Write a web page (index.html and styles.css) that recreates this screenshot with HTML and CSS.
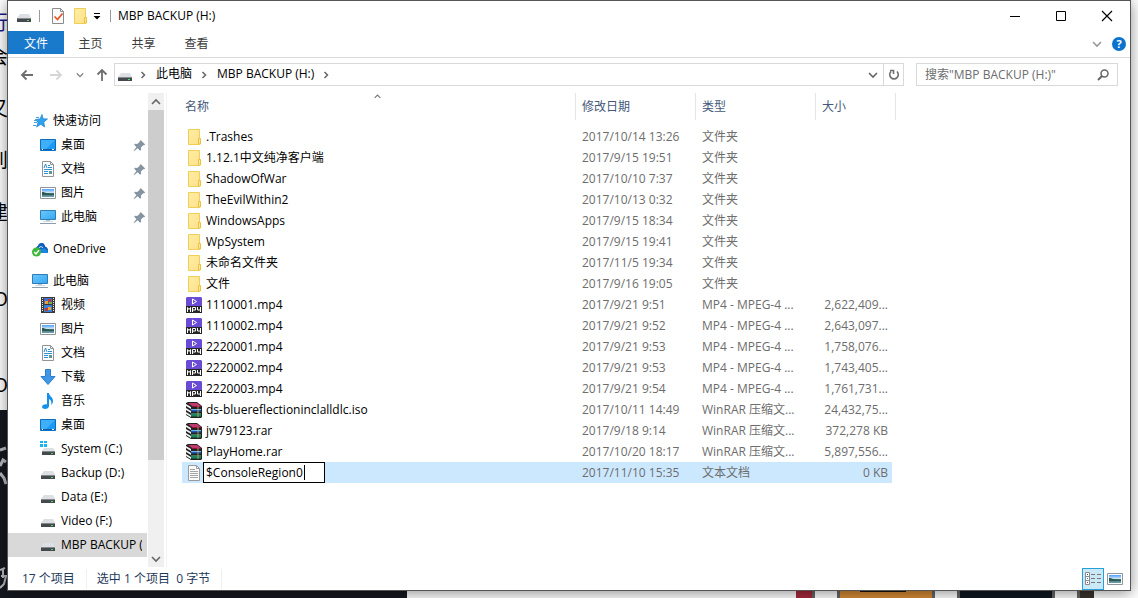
FILE: index.html
```html
<!DOCTYPE html>
<html lang="zh-CN">
<head>
    <meta charset="UTF-8">
    <meta name="viewport" content="width=device-width, initial-scale=1.0">
    <title>MBP BACKUP (H:)</title>
    <link rel="stylesheet" href="styles.css">
</head>
<body>
    <svg class="sprite" aria-hidden="true">
        <defs>
            <linearGradient id="gFolder" x1="0" x2="1" y1="0" y2="1">
                <stop offset="0" stop-color="#ffeda6"/><stop offset="1" stop-color="#ffe18a"/>
            </linearGradient>
            <linearGradient id="gScreen" x1="0" x2="1" y1="0" y2="1">
                <stop offset="0" stop-color="#6cc8fb"/><stop offset="1" stop-color="#35a7f2"/>
            </linearGradient>
            <linearGradient id="gPhoto" x1="0" x2="0" y1="0" y2="1">
                <stop offset="0" stop-color="#4f9df5"/><stop offset=".5" stop-color="#d6ecf8"/>
                <stop offset=".55" stop-color="#3f6f66"/><stop offset="1" stop-color="#6fa0b4"/>
            </linearGradient>
        </defs>
        <symbol id="folder" viewBox="0 0 16 16">
            <path d="M2.500.5h11v15h-11z" fill="url(#gFolder)" stroke="#f1cf57"/>
            <path d="M12.500 9.500h2v5.500h-2z" fill="#ffe79a" stroke="#e9c23f"/>
        </symbol>
        <symbol id="drive" viewBox="0 0 16 16">
            <path d="M4 6h9l2 4H1z" fill="#dcdfe3"/>
            <path d="M1 10h14v4H1z" fill="#45484c"/>
            <path d="M1 10h14v1H1z" fill="#85898e"/>
            <path d="M11 12h2v1h-2z" fill="#3fe05b"/>
        </symbol>
        <symbol id="sysdrive" viewBox="0 0 16 16">
            <path d="M0 0h3v2H0zM4 0h3v2H4zM0 3h3v3H0zM4 3h3v3H4z" fill="#14b4f0"/>
            <path d="M4 7h9l2 3H2z" fill="#dcdfe3"/>
            <path d="M2 10h13v4H2z" fill="#45484c"/>
            <path d="M2 10h13v1H2z" fill="#85898e"/>
            <path d="M11 12h2v1h-2z" fill="#3fe05b"/>
        </symbol>
        <symbol id="props" viewBox="0 0 16 16">
            <path d="M2.500.5h8l3 3v12h-11z" fill="#fbfbfb" stroke="#8b8b8b"/>
            <path d="M10.500.5v3h3" fill="none" stroke="#8b8b8b"/>
            <path d="M4.500 8.500l3 3 5-6" fill="none" stroke="#e9531e" stroke-width="1.700"/>
        </symbol>
        <symbol id="star" viewBox="0 0 16 16">
            <path d="M10 1.500l1 4.200 4.500.3-3.700 3 .8 5-3.800-2.700-4.300 2.700L6 9.500 3.500 6.500 8 6z" fill="#2da2ee" stroke="#1a7fd0" stroke-width=".7"/>
            <path d="M4 4.500h3M2 7.500h3M2 9.500h3M1 12.500h3" stroke="#4d9fd8"/>
        </symbol>
        <symbol id="desktop" viewBox="0 0 16 16">
            <path d="M.5 2.500h15v11H.5z" fill="#1b9bf5" stroke="#0d6ebd"/>
            <path d="M1 3h14L6 12H1z" fill="#3eb0fb"/>
            <path d="M1 12h14v1H1z" fill="#0b62ab"/>
            <path d="M2 12h1v1H2zM12 12h2v1h-2z" fill="#fff"/>
        </symbol>
        <symbol id="doc" viewBox="0 0 16 16">
            <path d="M2.500.5h8l3 3v12h-11z" fill="#fdfdfd" stroke="#8f969b"/>
            <path d="M10.500.5v3h3" fill="none" stroke="#8f969b"/>
            <path d="M4 7l1.500-4L7 7M8 4.500h2M8 6.500h4M4 8.500h8M4 10.500h4M4 12.500h4" fill="none" stroke="#2d8fd6"/>
            <path d="M9 10h3v3H9z" fill="#5a9a95"/>
        </symbol>
        <symbol id="picture" viewBox="0 0 16 16">
            <path d="M.5 2.500h15v11H.5z" fill="#fff" stroke="#8f969b"/>
            <path d="M2 4h12v8H2z" fill="url(#gPhoto)"/>
            <path d="M2 7c3 0 5 2 12 2v1H2z" fill="#2e5a50"/>
        </symbol>
        <symbol id="pc" viewBox="0 0 16 16">
            <path d="M.5 1.500h15v9H.5z" fill="url(#gScreen)" stroke="#2f7db5"/>
            <path d="M6 11h4v1H6z" fill="#a9c8dc"/>
            <path d="M3 12.500h10" stroke="#d3dce2"/>
            <path d="M0 14.500h16" stroke="#8a9eac"/>
        </symbol>
        <symbol id="cloud" viewBox="0 0 16 16">
            <path d="M4 11V8c0-2 1-3 2-3 0-2 2-3.500 4-3 2 0 3 2 3 3.500 2 .5 3 2 3 3.500v3H7z" fill="#0f5fb8"/>
            <path d="M7 12c-1-3 1-5 3.500-4 1-1.500 3.500-1 3.500 1 1.500 0 2 1 2 3z" fill="#1a86dd"/>
            <path d="M7 7c1-2 3-1.500 4 0" fill="none" stroke="#fff"/>
            <circle cx="4.500" cy="11" r="4.500" fill="#3fb83a"/>
            <path d="M2.300 11l1.700 2 3-3.700" fill="none" stroke="#fff" stroke-width="1.400"/>
        </symbol>
        <symbol id="video" viewBox="0 0 16 16">
            <path d="M1 0h14v16H1z" fill="#3a3a3a"/>
            <path d="M2.500 1v14M13.500 1v14" stroke="#e8e8e8" stroke-dasharray="1 1"/>
            <path d="M4 1h8v6H4z" fill="#3f6fd0"/><path d="M4 8h8v7H4z" fill="#3a7fd8"/>
            <path d="M5 4h3v3H5zM8 10h3v3H8z" fill="#f0a22b"/>
            <path d="M8 2h3v3H8zM5 11h3v3H5z" fill="#c0392b"/>
            <path d="M9 5h3v2H9z" fill="#79b33a"/>
        </symbol>
        <symbol id="download" viewBox="0 0 16 16">
            <path d="M5.500.5h5v7h4.500l-7 8-7-8h4.500z" fill="#3f97e6" stroke="#2b7cca"/>
        </symbol>
        <symbol id="music" viewBox="0 0 16 16">
            <path d="M7 0h2c0 3 4 4 4 8 0 2-1 3-2 4 1-3 0-5-2-6v7c0 2-2 3-4 3s-3-1-3-2.200c0-1.800 3-3 5-2.300z" fill="#1590ea"/>
        </symbol>
        <symbol id="pin" viewBox="0 0 16 16">
            <path d="M9.500 2.500l4.500 4.500-1 .8-1-.2-2.500 2.500.3 2.400-1.200 1L6 11l-4 3-.3-.3 3-4L2.300 7.300l1-1.200 2.400.3L8.300 4 8 3.200z" fill="#8494a1"/>
        </symbol>
        <symbol id="mp4" viewBox="0 0 16 16">
            <path d="M1 0h14l1 1v8H0V1z" fill="#6a4bd6"/>
            <path d="M0 9h16v7H0z" fill="#252525"/>
            <path d="M6.500 2v5l4-2.500z" fill="none" stroke="#fff"/>
            <path d="M1.500 15v-4.500L3 12.500l1.500-2V15M6.500 15v-4.500h3v2.500h-3M11.500 10v3h3M14.500 10v5" fill="none" stroke="#fff"/>
        </symbol>
        <symbol id="rar" viewBox="0 0 16 16">
            <path d="M0 1l2-1h9l5 4v11l-1 1H5l-5-3z" fill="#222"/>
            <path d="M0 2l5 3v2L0 4zM0 6l5 3v2L0 8zM0 10l5 3v2L0 12z" fill="#f3f3f3"/>
            <path d="M2 1h9l4 3H6z" fill="#c03a6c"/><path d="M6 4h9v1H6z" fill="#8a1340"/>
            <path d="M5 7h10v1H5z" fill="#6fb6f0"/><path d="M5 8h10v1.500H5z" fill="#1c57b8"/>
            <path d="M5 11.500h10v1H5z" fill="#58d0a4"/><path d="M5 12.500h10v2H5z" fill="#11865c"/>
            <path d="M11 4h2v11h-2z" fill="#e9c14a" opacity=".35"/>
        </symbol>
        <symbol id="txt" viewBox="0 0 16 16">
            <path d="M2.500.5h8l3 3v12h-11z" fill="#fafafa" stroke="#9a9a9a"/>
            <path d="M10.500.5v3h3" fill="none" stroke="#9a9a9a"/>
            <path d="M4 4.500h5M4 6.500h8M4 8.500h8M4 10.500h8M4 12.500h8" stroke="#a5a5a5"/>
        </symbol>
        <symbol id="details" viewBox="0 0 16 16">
            <path d="M.5 1.500h4v12h-4zM.5 5.500h4M.5 9.500h4" fill="#fff" stroke="#8c8c8c"/>
            <path d="M6 3.500h4M12 3.500h4M6 7.500h4M12 7.500h4M6 11.500h4M12 11.500h4" stroke="#777"/>
            <path d="M2 3h1v1H2z" fill="#444"/><path d="M2 7h1v1H2z" fill="#1f8ae0"/><path d="M2 11h1v1H2z" fill="#e02020"/>
        </symbol>
        <symbol id="chevron" viewBox="0 0 10 10"><path d="M1 3l4 4 4-4" fill="none" stroke="currentColor" stroke-width="1.600"/></symbol>
        <symbol id="crumb" viewBox="0 0 10 10"><path d="M3.500 2l3 3-3 3" fill="none" stroke="currentColor" stroke-width="1.500"/></symbol>
    </svg>

    <!-- page behind the window -->
    <div class="backdrop">
        <div class="article">
            <p class="linked">行</p>
            <p>会</p>
            <p class="gap">又</p>
            <p class="gap">到</p>
            <p class="gap">建</p>
            <p>冫</p>
            <p class="gap">O</p>
            <p></p>
            <p class="gap">O</p>
        </div>
        <div class="media">
            <div class="photo">
                <svg width="8" height="182" fill="none" stroke="#b9bbc0">
                    <path d="M0 40l6-2M0 56l3-6 3 2M0 63l4 5 2 6" stroke-width="3"/>
                    <path d="M0 160l5-2M1 166h5l-2 8-4 4M3 158v10" stroke-width="2"/>
                </svg>
            </div>
            <div class="phones">
                <span class="phone phone-red"></span>
                <span class="phone phone-orange"></span>
                <span class="phone phone-dark"></span>
                <span class="phone phone-cut"></span>
            </div>
        </div>
    </div>

    <main class="window">
        <header class="titlebar">
            <svg class="icon"><use href="#drive"/></svg>
            <span class="sep"></span>
            <button class="quick" aria-label="属性"><svg class="icon"><use href="#props"/></svg></button>
            <button class="quick" aria-label="新建文件夹"><svg class="icon"><use href="#folder"/></svg></button>
            <button class="more" aria-label="自定义快速访问工具栏">
                <svg width="8" height="8" viewBox="0 0 8 8"><path d="M1 1.500h6" stroke="#000"/><path d="M.5 4h7L4 7.500z"/></svg>
            </button>
            <span class="sep"></span>
            <h1>MBP BACKUP (H:)</h1>
            <div class="controls">
                <button aria-label="最小化"><svg width="12" height="12"><path d="M1 6.500h10" stroke="#000"/></svg></button>
                <button aria-label="最大化"><svg width="12" height="12"><path d="M1.500 1.500h9v9h-9z" fill="none" stroke="#000"/></svg></button>
                <button aria-label="关闭"><svg width="12" height="12"><path d="M1 1l10 10M11 1L1 11" stroke="#000" stroke-width="1.200"/></svg></button>
            </div>
        </header>

        <nav class="ribbon">
            <button class="file-tab">文件</button>
            <button>主页</button>
            <button>共享</button>
            <button>查看</button>
            <div class="ribbon-end">
                <button aria-label="展开功能区"><svg class="small light"><use href="#chevron"/></svg></button>
                <button class="help" aria-label="帮助">?</button>
            </div>
        </nav>

        <div class="address-row">
            <button class="nav-btn" aria-label="后退"><svg width="14" height="12"><path d="M13 6H2M6.500 1.500L2 6l4.500 4.500" fill="none" stroke="#6e6e6e" stroke-width="1.800"/></svg></button>
            <button class="nav-btn" aria-label="前进"><svg width="14" height="12"><path d="M1 6h11M7.500 1.500L12 6l-4.500 4.500" fill="none" stroke="#d6d6d6" stroke-width="1.800"/></svg></button>
            <button class="nav-btn recent" aria-label="最近浏览的位置"><svg class="tiny"><use href="#chevron"/></svg></button>
            <button class="nav-btn up" aria-label="上移"><svg width="12" height="14"><path d="M6 13V2M1.500 6.500L6 2l4.500 4.500" fill="none" stroke="#6e6e6e" stroke-width="1.800"/></svg></button>
            <div class="address">
                <svg class="icon"><use href="#drive"/></svg>
                <svg class="small"><use href="#crumb"/></svg>
                <a href="#pc">此电脑</a>
                <svg class="small"><use href="#crumb"/></svg>
                <a href="#h">MBP BACKUP (H:)</a>
                <svg class="small"><use href="#crumb"/></svg>
                <button class="drop" aria-label="以前的位置"><svg class="small"><use href="#chevron"/></svg></button>
                <button class="refresh" aria-label="刷新">
                    <svg width="12" height="12" viewBox="0 0 12 12"><path d="M3 2.500A4.300 4.300 0 1 0 9 2.500M2 1.500h3.500V5" fill="none" stroke="#6e6e6e" stroke-width="1.600"/></svg>
                </button>
            </div>
            <label class="search">
                <input type="search" placeholder='搜索"MBP BACKUP (H:)"' aria-label="搜索">
                <svg width="12" height="12" viewBox="0 0 12 12"><circle cx="7.500" cy="4.500" r="3.500" fill="none" stroke="#666" stroke-width="1.500"/><path d="M5 7L1 11" stroke="#666" stroke-width="2"/></svg>
            </label>
        </div>

        <div class="content">
            <aside class="tree">
                <ul>
                    <li class="root"><a href="#quick"><svg class="icon"><use href="#star"/></svg>快速访问</a></li>
                    <li><a href="#desktop"><svg class="icon"><use href="#desktop"/></svg>桌面</a><svg class="pin"><use href="#pin"/></svg></li>
                    <li><a href="#docs"><svg class="icon"><use href="#doc"/></svg>文档</a><svg class="pin"><use href="#pin"/></svg></li>
                    <li><a href="#pics"><svg class="icon"><use href="#picture"/></svg>图片</a><svg class="pin"><use href="#pin"/></svg></li>
                    <li><a href="#pc"><svg class="icon"><use href="#pc"/></svg>此电脑</a><svg class="pin"><use href="#pin"/></svg></li>
                </ul>
                <ul>
                    <li class="root"><a href="#onedrive"><svg class="icon"><use href="#cloud"/></svg>OneDrive</a></li>
                </ul>
                <ul>
                    <li class="root"><a href="#pc"><svg class="icon"><use href="#pc"/></svg>此电脑</a></li>
                    <li><a href="#videos"><svg class="icon"><use href="#video"/></svg>视频</a></li>
                    <li><a href="#pics"><svg class="icon"><use href="#picture"/></svg>图片</a></li>
                    <li><a href="#docs"><svg class="icon"><use href="#doc"/></svg>文档</a></li>
                    <li><a href="#downloads"><svg class="icon"><use href="#download"/></svg>下载</a></li>
                    <li><a href="#music"><svg class="icon"><use href="#music"/></svg>音乐</a></li>
                    <li><a href="#desktop"><svg class="icon"><use href="#desktop"/></svg>桌面</a></li>
                    <li><a href="#c"><svg class="icon"><use href="#sysdrive"/></svg>System (C:)</a></li>
                    <li><a href="#d"><svg class="icon"><use href="#drive"/></svg>Backup (D:)</a></li>
                    <li><a href="#e"><svg class="icon"><use href="#drive"/></svg>Data (E:)</a></li>
                    <li><a href="#f"><svg class="icon"><use href="#drive"/></svg>Video (F:)</a></li>
                    <li class="current"><a href="#h"><svg class="icon"><use href="#drive"/></svg>MBP BACKUP (H:)</a></li>
                </ul>
            </aside>
            <div class="scrollbar">
                <button aria-label="向上滚动"><svg class="small flip"><use href="#chevron"/></svg></button>
                <div class="thumb"></div>
                <button aria-label="向下滚动"><svg class="small"><use href="#chevron"/></svg></button>
            </div>

            <section class="files">
                <table>
                    <colgroup><col class="c-name"><col class="c-date"><col class="c-type"><col class="c-size"></colgroup>
                    <thead>
                        <tr>
                            <th>名称<svg class="sort"><use href="#chevron"/></svg></th>
                            <th>修改日期</th>
                            <th>类型</th>
                            <th>大小</th>
                        </tr>
                    </thead>
                    <tbody>
                        <tr><td><svg class="icon"><use href="#folder"/></svg>.Trashes</td><td>2017/10/14 13:26</td><td>文件夹</td><td></td></tr>
                        <tr><td><svg class="icon"><use href="#folder"/></svg>1.12.1中文纯净客户端</td><td>2017/9/15 19:51</td><td>文件夹</td><td></td></tr>
                        <tr><td><svg class="icon"><use href="#folder"/></svg>ShadowOfWar</td><td>2017/10/10 7:37</td><td>文件夹</td><td></td></tr>
                        <tr><td><svg class="icon"><use href="#folder"/></svg>TheEvilWithin2</td><td>2017/10/13 0:32</td><td>文件夹</td><td></td></tr>
                        <tr><td><svg class="icon"><use href="#folder"/></svg>WindowsApps</td><td>2017/9/15 18:34</td><td>文件夹</td><td></td></tr>
                        <tr><td><svg class="icon"><use href="#folder"/></svg>WpSystem</td><td>2017/9/15 19:41</td><td>文件夹</td><td></td></tr>
                        <tr><td><svg class="icon"><use href="#folder"/></svg>未命名文件夹</td><td>2017/11/5 19:34</td><td>文件夹</td><td></td></tr>
                        <tr><td><svg class="icon"><use href="#folder"/></svg>文件</td><td>2017/9/16 19:05</td><td>文件夹</td><td></td></tr>
                        <tr><td><svg class="icon"><use href="#mp4"/></svg>1110001.mp4</td><td>2017/9/21 9:51</td><td>MP4 - MPEG-4 ...</td><td>2,622,409...</td></tr>
                        <tr><td><svg class="icon"><use href="#mp4"/></svg>1110002.mp4</td><td>2017/9/21 9:52</td><td>MP4 - MPEG-4 ...</td><td>2,643,097...</td></tr>
                        <tr><td><svg class="icon"><use href="#mp4"/></svg>2220001.mp4</td><td>2017/9/21 9:53</td><td>MP4 - MPEG-4 ...</td><td>1,758,076...</td></tr>
                        <tr><td><svg class="icon"><use href="#mp4"/></svg>2220002.mp4</td><td>2017/9/21 9:53</td><td>MP4 - MPEG-4 ...</td><td>1,743,405...</td></tr>
                        <tr><td><svg class="icon"><use href="#mp4"/></svg>2220003.mp4</td><td>2017/9/21 9:54</td><td>MP4 - MPEG-4 ...</td><td>1,761,731...</td></tr>
                        <tr><td><svg class="icon"><use href="#rar"/></svg>ds-bluereflectioninclalldlc.iso</td><td>2017/10/11 14:49</td><td>WinRAR 压缩文...</td><td>24,432,75...</td></tr>
                        <tr><td><svg class="icon"><use href="#rar"/></svg>jw79123.rar</td><td>2017/9/18 9:14</td><td>WinRAR 压缩文...</td><td>372,278 KB</td></tr>
                        <tr><td><svg class="icon"><use href="#rar"/></svg>PlayHome.rar</td><td>2017/10/20 18:17</td><td>WinRAR 压缩文...</td><td>5,897,556...</td></tr>
                        <tr class="selected">
                            <td><svg class="icon"><use href="#txt"/></svg><span class="rename"><input type="text" value="$ConsoleRegion0" aria-label="文件名"><span class="caret"></span></span></td>
                            <td>2017/11/10 15:35</td><td>文本文档</td><td>0 KB</td>
                        </tr>
                    </tbody>
                </table>
            </section>
        </div>

        <footer class="status">
            <span>17 个项目</span>
            <span>选中 1 个项目&nbsp; 0 字节</span>
            <div class="views">
                <button class="active" aria-label="详细信息"><svg class="icon"><use href="#details"/></svg></button>
                <button aria-label="大图标"><svg class="icon"><use href="#picture"/></svg></button>
            </div>
        </footer>
    </main>
</body>
</html>
```

FILE: styles.css
```css
* {
    box-sizing: border-box;
}
body {
    margin: 0;
    height: 100vh;
    overflow: hidden;
    background-color: #fff;
    color: #000;
    font: 12px/20px "Open Sans", "Noto Sans CJK SC", sans-serif;
}
h1, p, ul {
    margin: 0;
    padding: 0;
    list-style: none;
}
button, input {
    padding: 0;
    border: 0;
    background: none;
    font: inherit;
    color: inherit;
}
button {
    display: flex;
    align-items: center;
    justify-content: center;
}
a {
    color: inherit;
    text-decoration: none;
}
svg {
    flex: none;
}
.sprite {
    position: absolute;
    width: 0;
    height: 0;
}
.icon {
    width: 16px;
    height: 16px;
}
.pin {
    width: 15px;
    height: 15px;
}
.small {
    width: 10px;
    height: 10px;
    color: #666;
}
.tiny {
    width: 8px;
    height: 8px;
    color: #777;
}
.light {
    color: #999;
}
.flip {
    transform: rotate(180deg);
}

/* page behind */
.backdrop {
    display: flex;
    flex-direction: column;
    height: 100vh;
}
.article {
    width: 8px;
    height: 416px;
    padding-top: 6px;
    overflow: hidden;
    font-size: 20px;
}
.article p {
    display: flex;
    justify-content: flex-end;
    height: 34px;
    line-height: 34px;
}
.article .gap {
    margin-top: 18px;
}
.article .linked {
    color: #1a1a8c;
}
.media {
    flex: 1;
    display: flex;
    align-items: flex-end;
    justify-content: space-between;
}
.photo {
    align-self: stretch;
    width: 407px;
    background-color: #15181f;
}
.phones {
    display: flex;
    gap: 22px;
    margin-right: 44px;
}
.phone {
    width: 98px;
    height: 8px;
    border: solid #666;
    border-width: 0 3px;
    background-color: #101820;
}
.phone-red {
    width: 19px;
    border-left: 0;
    background-color: #a8283c;
}
.phone-orange {
    background: linear-gradient(90deg, transparent 20px, #1c1512 20px, #1c1512 66px, transparent 66px) 0 0/100% 2px no-repeat, #d68a35;
}
.phone-cut {
    width: 17px;
    border-right: 0;
    background-color: #3a332c;
}

/* explorer window */
.window {
    position: absolute;
    inset: 0 7px 7px;
    display: flex;
    flex-direction: column;
    border: 1px solid #555;
    background-color: #fff;
    box-shadow: 0 2px 14px rgba(0, 0, 0, 0.45);
}
.titlebar {
    display: flex;
    align-items: center;
    height: 30px;
    padding-left: 8px;
}
.titlebar h1 {
    font-size: 12px;
    font-weight: normal;
}
.sep {
    width: 1px;
    height: 12px;
    margin: 0 7px;
    background-color: #999;
}
.quick {
    width: 22px;
}
.more {
    width: 12px;
}
.controls {
    display: flex;
    margin-left: auto;
}
.controls button {
    width: 46px;
    height: 29px;
}
.ribbon {
    display: flex;
    height: 27px;
    padding-bottom: 3px;
    border-bottom: 1px solid #d9dcdf;
    color: #3b3b3b;
}
.ribbon > button {
    width: 53px;
    padding-top: 2px;
}
.ribbon .file-tab {
    width: 56px;
    background-color: #1979ca;
    color: #fff;
}
.ribbon-end {
    display: flex;
    align-items: center;
    gap: 10px;
    margin-left: auto;
    padding: 3px 4px 0 0;
}
.help {
    width: 14px;
    height: 14px;
    border-radius: 50%;
    background-color: #0a73d0;
    color: #fff;
    font-size: 11px;
    font-weight: bold;
}
.address-row {
    display: flex;
    align-items: center;
    height: 35px;
    padding: 0 12px 2px 4px;
}
.nav-btn {
    width: 29px;
    height: 22px;
}
.recent {
    width: 19px;
}
.up {
    width: 25px;
}
.address, .search {
    display: flex;
    align-items: center;
    height: 23px;
    border: 1px solid #d9d9d9;
}
.address {
    flex: 1;
    padding-left: 2px;
}
.address .small {
    margin: 0 5px;
}
.address a {
    padding: 0 2px 2px 3px;
}
.address button {
    width: 20px;
    height: 100%;
}
.drop {
    margin-left: auto;
}
.refresh {
    border-left: 1px solid #d9d9d9;
}
.search {
    width: 202px;
    margin-left: 12px;
    padding: 0 8px;
}
.search input {
    flex: 1;
    min-width: 0;
    outline: 0;
}
.search input::placeholder {
    color: #6d6d6d;
    opacity: 1;
}

.content {
    flex: 1;
    display: flex;
    min-height: 0;
}
.tree {
    width: 140px;
    padding: 16px 1px 0 0;
    overflow: hidden;
}
.tree ul {
    margin-bottom: 8px;
}
.tree li {
    display: flex;
    align-items: center;
    height: 24px;
    padding-left: 32px;
}
.tree .root {
    padding-left: 24px;
}
.tree a {
    flex: 1;
    display: flex;
    align-items: center;
    gap: 5px;
    min-width: 0;
    margin-right: 5px;
    overflow: hidden;
    white-space: nowrap;
}
.tree .current {
    background-color: #d9d9d9;
}
.scrollbar {
    display: flex;
    flex-direction: column;
    width: 16px;
    background-color: #f0f0f0;
}
.scrollbar button {
    height: 17px;
}
.thumb {
    height: 350px;
    margin-bottom: auto;
    background-color: #cdcdcd;
}
.files {
    flex: 1;
    margin-left: 2px;
    padding-left: 15px;
    border-left: 1px solid #f3f3f3;
    overflow: hidden;
}
table {
    table-layout: fixed;
    width: 714px;
    border-collapse: separate;
    border-spacing: 0;
}
.c-name {
    width: 394px;
}
.c-date, .c-type {
    width: 120px;
}
th {
    position: relative;
    height: 27px;
    padding: 0 6px;
    border-right: 1px solid #e5e5e5;
    color: #44597a;
    font-weight: normal;
    text-align: left;
}
th:first-child {
    padding-left: 3px;
}
.sort {
    position: absolute;
    top: 0;
    left: 191px;
    width: 9px;
    height: 7px;
    color: #777;
    transform: rotate(180deg);
}
thead::after {
    content: "";
    display: block;
    height: 6px;
}
td {
    height: 21px;
    padding: 0 6px;
    color: #6d6d6d;
    white-space: nowrap;
}
td:first-child {
    display: flex;
    align-items: center;
    gap: 4px;
    padding-left: 4px;
    color: #000;
}
td:last-child {
    padding-right: 4px;
    border-right: 4px solid transparent;
    background-clip: padding-box;
    text-align: right;
}
.selected td {
    background-color: #cce8ff;
}
.rename {
    position: relative;
    display: flex;
    margin-left: -3px;
}
.rename input {
    width: 122px;
    height: 21px;
    padding: 0 2px;
    border: 1px solid #000;
    background-color: #fff;
    outline: 0;
}
.caret {
    position: absolute;
    top: 3px;
    left: 101px;
    width: 1px;
    height: 15px;
    background-color: #000;
}
.status {
    display: flex;
    align-items: center;
    height: 23px;
    padding-left: 14px;
    color: #1e395b;
}
.status > span {
    padding-right: 11px;
    margin-right: 10px;
    border-right: 1px solid #f0f0f0;
}
.views {
    display: flex;
    margin-left: auto;
    padding-right: 4px;
}
.views button {
    width: 22px;
    height: 22px;
}
.views .active {
    border: 1px solid #26a0da;
    background-color: #cbe8f6;
}
```
